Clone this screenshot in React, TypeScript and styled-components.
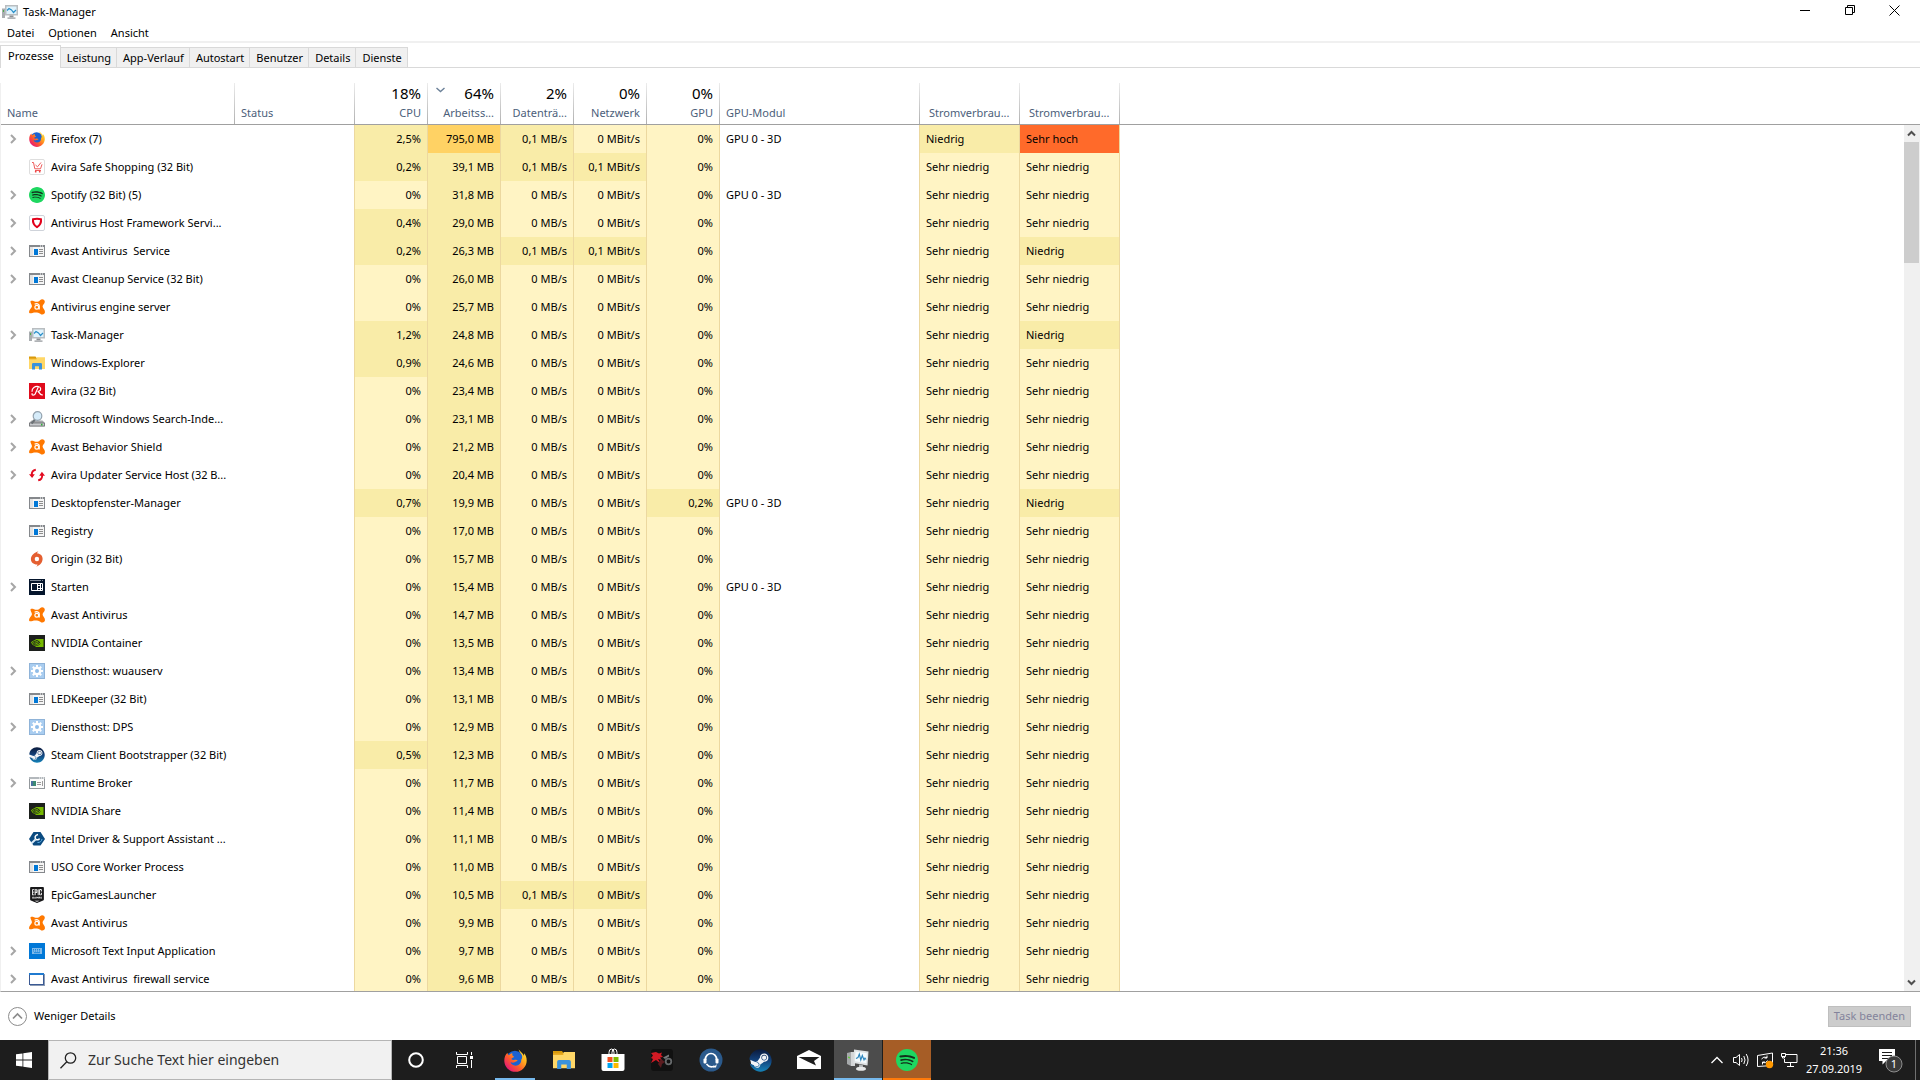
import React from "react";
import styled, { createGlobalStyle, css } from "styled-components";
import { SiEpicgames, SiNvidia, SiSpotify } from "react-icons/si";
import { FaSteam } from "react-icons/fa";

const font = `"Noto Sans", "Open Sans", sans-serif`;

const GlobalStyle = createGlobalStyle`
  *, *::before, *::after { box-sizing: border-box; }
  body { margin: 0; background: #fff; color: #000; font: 11px/16px ${font}; overflow: hidden; }
  button, input { font: inherit; color: inherit; border: 0; margin: 0; padding: 0; background: none; }
`;

const Desktop = styled.div`
  display: flex;
  flex-direction: column;
  height: 100vh;
`;

const TitleBar = styled.header`
  display: flex;
  align-items: flex-start;
  justify-content: space-between;
  height: 24px;
`;

const Title = styled.h1`
  display: flex;
  align-items: center;
  gap: 5px;
  margin: 0;
  padding: 4px 0 0 2px;
  font-size: 11px;
  font-weight: 400;
  line-height: 16px;
`;

const WindowControls = styled.div`
  display: flex;
  padding-right: 3px;
`;

const ControlButton = styled.button`
  display: flex;
  align-items: center;
  justify-content: center;
  width: 45px;
  height: 20px;
`;

const MenuBar = styled.nav`
  display: flex;
  height: 19px;
  border-bottom: 2px solid #f0f0f0;
`;

const MenuItem = styled.button`
  padding: 0 7px;
  line-height: 17px;
`;

const Tabs = styled.div`
  display: flex;
  align-items: flex-end;
  height: 25px;
  flex: none;
  box-shadow: inset 0 -1px 0 #d9d9d9;
`;

const Tab = styled.button<{ $active?: boolean }>`
  height: 21px;
  padding: 0 5px 0 6px;
  line-height: 18px;
  border: 1px solid #d9d9d9;
  border-left-width: 0;
  background: #f0f0f0;
  ${(p) =>
    p.$active &&
    css`
      height: 23px;
      padding: 0 6px 3px 7px;
      border-left-width: 1px;
      border-bottom: 0;
      background: #fff;
    `}
`;

const ProcessPane = styled.main`
  position: relative;
  flex: 1;
  min-height: 0;
  margin-top: 15px;
  overflow: hidden;
  border-bottom: 1px solid #a0a0a0;
  border-left: 1px solid #f0f0f0;
`;

const Table = styled.table`
  width: 100%;
  table-layout: fixed;
  border-collapse: separate;
  border-spacing: 0;
`;

const Col = styled.col<{ $w?: number }>`
  width: ${(p) => (p.$w ? `${p.$w}px` : "auto")};
`;

const HeadCell = styled.th<{ $align?: string; $plain?: boolean; $inset?: boolean }>`
  position: relative;
  height: 42px;
  padding: 0 6px 3px ${(p) => (p.$inset ? 9 : 6)}px;
  border-bottom: 1px solid #a0a0a0;
  background: ${(p) =>
    p.$plain ? "none" : "linear-gradient(#ececec, #b0b0b0) right / 1px 100% no-repeat"};
  color: #4c607a;
  font-weight: 400;
  text-align: ${(p) => p.$align ?? "left"};
  vertical-align: bottom;
  white-space: nowrap;
  ${(p) => p.$align === "right" && "padding-right: 7px;"}
`;

const Total = styled.span`
  display: block;
  margin-bottom: 2px;
  color: #000;
  font-size: 15px;
  line-height: 20px;
`;

const SortMark = styled.svg`
  position: absolute;
  top: 4px;
  left: 8px;
`;

const heat = ["#fff4c4", "#f9eca8", "#ffd264", "#ff6a2a"];

const Cell = styled.td<{ $heat?: number; $align?: string; $edge?: boolean }>`
  height: 28px;
  padding: 0 6px;
  background: ${(p) => (p.$heat === undefined ? "#fff" : heat[p.$heat])};
  border-right: ${(p) => (p.$edge ? "1px solid #ecd8a0" : "0")};
  text-align: ${(p) => p.$align ?? "left"};
  white-space: pre;
`;

const NameCell = styled.div`
  display: flex;
  align-items: center;
  height: 28px;
  padding-left: 2px;
`;

const Expander = styled.button`
  display: flex;
  width: 20px;
  height: 16px;
  align-items: center;
  padding-left: 1px;
`;

const ExpanderGap = styled.span`
  width: 20px;
`;

const ProcessName = styled.span`
  margin-left: 6px;
`;

const ScrollBar = styled.div`
  position: absolute;
  top: 42px;
  right: 0;
  bottom: 0;
  display: flex;
  flex-direction: column;
  width: 16px;
  background: #f0f0f0;
`;

const ScrollButton = styled.button`
  display: flex;
  align-items: center;
  justify-content: center;
  width: 15px;
  height: 17px;
`;

const ScrollTrack = styled.div`
  flex: 1;
  padding-right: 1px;
`;

const ScrollThumb = styled.div`
  height: 121px;
  background: #cdcdcd;
`;

const Footer = styled.footer`
  display: flex;
  align-items: center;
  justify-content: space-between;
  height: 48px;
  padding: 0 9px 0 8px;
`;

const DetailsToggle = styled.button`
  display: flex;
  align-items: center;
  gap: 7px;
`;

const EndTask = styled.button`
  height: 21px;
  padding: 0 5px;
  border: 1px solid #bfbfbf;
  background: #cccccc;
  color: #83839b;
  line-height: 18px;
`;

const TaskBar = styled.div`
  display: flex;
  height: 40px;
  background: #1d1d1d;
  color: #fff;
`;

const TaskSlot = styled.button<{ $bg?: string; $line?: string; $short?: boolean }>`
  display: flex;
  align-items: center;
  justify-content: center;
  width: 48px;
  height: 40px;
  background: ${(p) =>
    [
      p.$line
        ? `linear-gradient(${p.$line}, ${p.$line}) bottom / ${p.$short ? "40px" : "100%"} 2px no-repeat`
        : "",
      p.$bg ? `linear-gradient(${p.$bg}, ${p.$bg})` : "",
    ]
      .filter(Boolean)
      .join(", ") || "none"};
`;

const SearchBox = styled.label`
  display: flex;
  align-items: center;
  gap: 11px;
  width: 344px;
  padding: 0 11px;
  border: 1px solid #b5b5b5;
  background: #f1f1f1;
`;

const SearchInput = styled.input`
  flex: 1;
  min-width: 0;
  outline: 0;
  font-size: 14px;
  line-height: 20px;
  &::placeholder {
    color: #333;
    opacity: 1;
  }
`;

const PinnedApps = styled.div`
  display: flex;
  gap: 1px;
  margin-left: 3px;
`;

const Tray = styled.div`
  display: flex;
  align-items: center;
  margin-left: auto;
`;

const TrayButton = styled.button`
  display: flex;
  align-items: center;
  justify-content: center;
  width: 24px;
  height: 40px;
`;

const Clock = styled.time`
  width: 66px;
  font-size: 11px;
  line-height: 18px;
  text-align: center;
`;

const ActionCenter = styled.button`
  display: flex;
  align-items: center;
  justify-content: center;
  width: 48px;
  height: 40px;
`;

const ShowDesktop = styled.button`
  width: 5px;
  height: 40px;
  border-left: 1px solid #707070;
`;

const Stack = styled.span<{ $size: number }>`
  display: grid;
  place-items: center;
  width: ${(p) => p.$size}px;
  height: ${(p) => p.$size}px;
  flex: none;
  > * {
    grid-area: 1 / 1;
  }
`;

const Drawing = styled.svg`
  flex: none;
`;

type IconProps = { size?: number };

const Svg = ({ size = 16, children, box = 16 }: IconProps & { children: React.ReactNode; box?: number }) => (
  <Drawing width={size} height={size} viewBox={`0 0 ${box} ${box}`} aria-hidden="true">
    {children}
  </Drawing>
);

const Firefox = ({ size }: IconProps) => (
  <Svg size={size}>
    <defs>
      <linearGradient id="fxBody" x1="1" y1="0" x2="0.1" y2="0.9">
        <stop offset="0" stopColor="#fff04a" />
        <stop offset="0.35" stopColor="#ffb01e" />
        <stop offset="0.65" stopColor="#ff5a2c" />
        <stop offset="1" stopColor="#e2127e" />
      </linearGradient>
    </defs>
    <circle cx="7.6" cy="7.2" r="6" fill="#1b62d1" />
    <path
      d="M10.2.3c.2 1.7 1.6 2.4 2.2 3.900.5 1.300.2 2.400-.4 3.300.1 2.400-1.600 4.100-3.900 4.100-1.900 0-3.300-1.100-3.500-2.500 1 .7 2.100.6 3.100 0 .8-.5 1.500-.6 1.900-.7-.5-.9-1.600-1-2.600-.8-.8.200-1.500-.1-1.900-.6.700-1.100 1.900-.9 1.900-1.700-1.100-.5-1.300-1.100-1.200-2.400-1.100.3-1.900.8-2.400 1.400-.6-.2-.9-.9-1-1.700C1 3.800.2 5.700.2 8c0 4.400 3.500 7.900 7.800 7.900s7.800-3.500 7.800-7.900c0-2.200-.8-3.900-1.900-5 .1.700.1 1.300 0 1.700C13.200 2.600 11.300 2 10.200.3z"
      fill="url(#fxBody)"
    />
  </Svg>
);

const Cart = () => (
  <Svg>
    <rect x="0.5" y="0.5" width="15" height="15" rx="1.5" fill="#fff" stroke="#dedede" />
    <path d="M3 3.5h1.500l1.300 6.300h5.700L13 5.300M6 11.500h6M6.500 6l2 1.800L12 3.500" fill="none" stroke="#ee5b5b" strokeWidth="1" />
    <circle cx="6.7" cy="12.7" r="0.9" fill="#e44" />
    <circle cx="10.7" cy="12.7" r="0.9" fill="#e44" />
  </Svg>
);

const Spotify = ({ size = 16 }: IconProps) => (
  <Stack $size={size}>
    <Svg size={size - 2}>
      <circle cx="8" cy="8" r="7.5" fill="#12301c" />
    </Svg>
    <SiSpotify size={size} color="#1ed760" />
  </Stack>
);

const Shield = () => (
  <Svg>
    <rect x="0.5" y="0.5" width="15" height="15" rx="1.5" fill="#fff" stroke="#cfd3da" />
    <path d="M4 4.200c2.600-.6 5.400-.6 8 0 .4 3.400-1 6.200-4 8-3-1.800-4.400-4.600-4-8z" fill="none" stroke="#e2001a" strokeWidth="2" />
  </Svg>
);

const AppWindow = () => (
  <Svg>
    <rect x="0.5" y="2.5" width="15" height="11" fill="#f5f5f5" stroke="#85888c" />
    <path d="M0 2h16v2H0z" fill="#85888c" />
    <path d="M11 2.500h1v1h-1zM13 2.500h1v1h-1z" fill="#fff" />
    <path d="M1 4h3v9H1z" fill="#e3e3e3" />
    <path d="M5 6h4v6H5z" fill="#0078d7" />
    <path d="M10 6.500h4M10 8.500h4M10 10.500h4" stroke="#8e8e8e" />
  </Svg>
);

const BrokerWindow = () => (
  <Svg>
    <rect x="0.5" y="2.5" width="15" height="11" fill="#fbfbfb" stroke="#93989c" />
    <path d="M0 2h16v2H0z" fill="#b3b8bc" />
    <path d="M10 2.500h1v1h-1zM12 2.500h1v1h-1zM14 2.500h1v1h-1z" fill="#fff" />
    <path d="M2 6h5v5H2z" fill="#3c8a72" />
    <path d="M2 6h2v5H2z" fill="#4a6fa0" />
    <path d="M8 7.500h4M8 9.500h4M13.500 6v5" stroke="#9b9b9b" />
  </Svg>
);

const PlainWindow = () => (
  <Svg>
    <path d="M1 3h15v12H1z" fill="#8b9bb5" />
    <rect x="0.5" y="2.5" width="14" height="11" fill="#fff" stroke="#3b5a94" />
    <path d="M0 2h15v2H0z" fill="#1f7ad0" />
  </Svg>
);

const Avast = () => (
  <Svg>
    <path
      d="M1.500 3C1.200 1.600 3 1.400 5 2.200c2.500 1 4.700.6 6-1C13-.5 16 .5 15.800 3c-.2 2.200-2.200 2.500-2.200 4.500 0 2 2.400 3 2.400 5.500 0 2.500-3 3.300-4.700 1.700C9.500 13.400 6 13 3.500 13.900 1.500 14.600 0 14.500 0 13c0-2 2.600-4 2.900-5.500C3.100 6 1.900 5 1.500 3z"
      fill="#ff7800"
    />
    <path d="M5.600 5.200c1.800-1 4.600-.7 4.600 1.600v3.600" fill="none" stroke="#fff" strokeWidth="1.300" />
    <circle cx="7.8" cy="8.3" r="1.9" fill="none" stroke="#fff" strokeWidth="1.2" />
  </Svg>
);

const TaskManager = ({ size }: IconProps) => (
  <Svg size={size}>
    <path d="M0 4.500h3v9.500H0z" fill="#a9adb0" />
    <path d="M1 6h1v2H1z" fill="#4fae4a" />
    <path d="M3 1h13v10.500H3z" fill="#b9bdc0" />
    <path d="M4.500 2.500h10v7.500h-10z" fill="#dff3fd" />
    <path d="M5 6.500l2-2 2.500 1.500 2 2.500 2.500-2.500" fill="none" stroke="#2b8fc9" strokeWidth="1.200" />
    <path d="M7.500 11.500h4v2h-4z" fill="#8d9194" />
    <path d="M5.500 13.300h8V15h-8z" fill="#b0b3b6" />
  </Svg>
);

const TaskManagerLarge = () => (
  <Svg size={24} box={24}>
    <path d="M1 5l4-1v14l-4-2z" fill="#a6a9ab" />
    <path d="M5 4h4v14H5z" fill="#d4d6d8" />
    <path d="M2 8.500l2 .5v1.500L2 10z" fill="#62c93f" />
    <path d="M8 1.500l14.500 2-1 14L7.500 15z" fill="#dfe2e4" />
    <path d="M9.500 3.500l11.500 1.700-.8 10L9 13.300z" fill="#f4fafd" />
    <path d="M10 10.500l2-1 1.300-3.500 1.500 6 1.500-4.500 1.700 4.500 1-2 1 1.500" fill="none" stroke="#2a84bd" strokeWidth="1.100" />
    <path d="M13 16.500l4 .7v3h-4z" fill="#b4b7ba" />
    <ellipse cx="15" cy="20.800" rx="5" ry="2" fill="#e6e7e8" />
  </Svg>
);

const Explorer = ({ size }: IconProps) => (
  <Svg size={size}>
    <path d="M0 1.500h6.500l1.500 2H0z" fill="#d99a0b" />
    <path d="M0 3.500h7l1-1.300h8V14H0z" fill="#ffd767" />
    <path d="M0 3h7.500v1.300H0z" fill="#e8a81c" />
    <path d="M3 14.500V9.300q0-1.300 1.300-1.300h7.400q1.300 0 1.300 1.300v5.200h-3v-3.200H6v3.200z" fill="#3a92dc" />
  </Svg>
);

const Avira = () => (
  <Svg>
    <path d="M0 0h16v16H0z" fill="#e00b1c" />
    <path
      d="M3 8.700C2.700 4.700 6.200 3 9.300 3.500c3.200.5 3 4 .6 4.700M3.300 10.300q-.8 1.800.9 1.800 1.400 0 2.200-1.500L9.300 4M8.800 8l2.500 3q1 1.200 2.500.8"
      fill="none"
      stroke="#fff"
      strokeWidth="1.200"
    />
  </Svg>
);

const SearchIndexer = () => (
  <Svg>
    <path d="M2.500 9.500h11L16 12v3.500H0V12z" fill="#a3a5a8" />
    <path d="M0.500 12h15v3h-15z" fill="#c9cbce" stroke="#6e7074" strokeWidth="0.8" />
    <path d="M12 12.700h1.500v1.700H12z" fill="#2fae35" />
    <path d="M6 8.500L2.500 12.500" stroke="#6c7176" strokeWidth="2" />
    <circle cx="8.5" cy="5" r="4.3" fill="#d6ecfa" stroke="#93a2ae" strokeWidth="1.2" />
  </Svg>
);

const Updater = () => (
  <Svg>
    <path d="M6.800 2.700C4 3 2.500 5 2.900 8.200M9.200 13.300c2.800-.3 4.300-2.300 3.900-5.500" fill="none" stroke="#e30b20" strokeWidth="1.9" />
    <path d="M0 7.300h5.800L3.100 11zM10.200 8.700H16L12.900 4.800z" fill="#e30b20" />
  </Svg>
);

const Origin = () => (
  <Svg>
    <path
      d="M9.500.3C8.600.9 8.300 1.700 8.200 2.400c3.300 0 5.400 2.400 5.400 5.400 0 3.600-2.300 6.500-6.300 7.900.9-.8 1.200-1.500 1.200-2.200C4.500 13.700 1.900 11.300 1.900 8c0-3.600 3.600-6.600 7.600-7.700z"
      fill="#e45f31"
    />
    <circle cx="7.9" cy="8" r="2.2" fill="#fff" />
  </Svg>
);

const StartTile = () => (
  <Svg>
    <path d="M0 0h16v16H0z" fill="#04152c" />
    <path d="M1 1.500h11M13 1.500h1" stroke="#7f8a99" />
    <path d="M2.500 4.500h11v7h-11zM8.500 4.500v7M11.500 4.500v7M8.500 6.500h3M8.500 9.500h5" fill="none" stroke="#fff" />
  </Svg>
);

const Nvidia = () => (
  <Stack $size={16}>
    <Svg>
      <path d="M0 0h16v16H0z" fill="#1c1f1c" />
      <path d="M7 4h7.500v8H7z" fill="#76b900" />
      <path d="M2 8c1.500-2.500 3-3.300 5-3.300 2.200 0 3.500 1.300 5 3.300-1.500 2-3 3.300-5 3.300S3.500 10.500 2 8z" fill="#1c1f1c" />
    </Svg>
    <SiNvidia size={12} color="#76b900" />
  </Stack>
);

const Gear = () => (
  <Svg>
    <rect x="0.5" y="0.5" width="15" height="15" fill="#a9cdf0" stroke="#8fb3d8" />
    <path
      d="M8 2v12M2 8h12M3.800 3.800l8.400 8.400M12.200 3.800l-8.400 8.400"
      stroke="#fff"
      strokeWidth="2"
    />
    <circle cx="8" cy="8" r="4.3" fill="#fff" />
    <circle cx="8" cy="8" r="2" fill="#8fbce8" />
  </Svg>
);

const Steam = ({ size = 16 }: IconProps) => (
  <Stack $size={size}>
    <Svg size={size}>
      <defs>
        <linearGradient id="steamBody" x1="0" y1="0" x2="0" y2="1">
          <stop offset="0" stopColor="#0b1a3c" />
          <stop offset="0.5" stopColor="#12427c" />
          <stop offset="1" stopColor="#1583b8" />
        </linearGradient>
      </defs>
      <circle cx="8" cy="8" r="7" fill="#f2f4f7" />
    </Svg>
    <FaSteam size={size} fill="url(#steamBody)" />
  </Stack>
);

const Intel = () => (
  <Svg>
    <path d="M4.500 1h7L16 8l-4.500 6.500h-7L0 8z" fill="#0a4a80" />
    <path d="M9 3.500c-3 .7-3.700 3.300-2 4.800 1.300 1 3 .6 3.500-.8" fill="none" stroke="#fff" strokeWidth="1.5" />
    <path d="M6.500 8.500L2.500 12.300" stroke="#d8e9f6" strokeWidth="2" />
    <path d="M8.500 11.500c2.500.2 4-1 4.500-3.500" fill="none" stroke="#5fb0e5" />
  </Svg>
);

const Epic = () => (
  <Stack $size={16}>
    <Svg>
      <path d="M2 0h12v13.300L8 16l-6-2.700z" fill="#fff" />
    </Svg>
    <SiEpicgames size={16} color="#18181a" />
  </Stack>
);

const TextInputApp = () => (
  <Svg>
    <path d="M0 0h16v16H0z" fill="#0078d7" />
    <path d="M3 5h10v6H3z" fill="#7fbaea" />
    <path d="M4 6.500h8M4 8h8" stroke="#0078d7" strokeWidth="0.8" strokeDasharray="1 1" />
    <path d="M5 9.700h6" stroke="#0078d7" strokeWidth="0.8" />
  </Svg>
);

const Chevron = () => (
  <svg width="8" height="10" viewBox="0 0 8 10" fill="none" stroke="#a6a6a6" strokeWidth="2" aria-hidden="true">
    <path d="M1 1l4 4-4 4" />
  </svg>
);

const ScrollArrow = ({ down }: { down?: boolean }) => (
  <svg width="9" height="7" viewBox="0 0 9 7" fill="none" stroke="#505050" strokeWidth="2" aria-hidden="true">
    <path d={down ? "M1 1.500l3.500 3.500L8 1.500" : "M1 5.500L4.500 2 8 5.500"} />
  </svg>
);

const VL = "Sehr niedrig";
const L = "Niedrig";

type Process = {
  name: string;
  icon: React.FC<IconProps>;
  open?: boolean;
  cpu?: string;
  mem: string;
  disk?: string;
  net?: string;
  netHeat?: number;
  gpu?: string;
  engine?: boolean;
  power?: string;
  trend?: string;
};

const processes: Process[] = [
  { name: "Firefox (7)", icon: Firefox, open: true, cpu: "2,5", mem: "795,0", disk: "0,1", engine: true, power: L, trend: "Sehr hoch" },
  { name: "Avira Safe Shopping (32 Bit)", icon: Cart, cpu: "0,2", mem: "39,1", disk: "0,1", net: "0,1", netHeat: 1 },
  { name: "Spotify (32 Bit) (5)", icon: Spotify, open: true, mem: "31,8", engine: true },
  { name: "Antivirus Host Framework Servi...", icon: Shield, open: true, cpu: "0,4", mem: "29,0" },
  { name: "Avast Antivirus  Service", icon: AppWindow, open: true, cpu: "0,2", mem: "26,3", disk: "0,1", net: "0,1", netHeat: 1, trend: L },
  { name: "Avast Cleanup Service (32 Bit)", icon: AppWindow, open: true, mem: "26,0" },
  { name: "Antivirus engine server", icon: Avast, mem: "25,7" },
  { name: "Task-Manager", icon: TaskManager, open: true, cpu: "1,2", mem: "24,8", trend: L },
  { name: "Windows-Explorer", icon: Explorer, cpu: "0,9", mem: "24,6" },
  { name: "Avira (32 Bit)", icon: Avira, mem: "23,4" },
  { name: "Microsoft Windows Search-Inde...", icon: SearchIndexer, open: true, mem: "23,1" },
  { name: "Avast Behavior Shield", icon: Avast, open: true, mem: "21,2" },
  { name: "Avira Updater Service Host (32 B...", icon: Updater, open: true, mem: "20,4" },
  { name: "Desktopfenster-Manager", icon: AppWindow, cpu: "0,7", mem: "19,9", gpu: "0,2", engine: true, trend: L },
  { name: "Registry", icon: AppWindow, mem: "17,0" },
  { name: "Origin (32 Bit)", icon: Origin, mem: "15,7" },
  { name: "Starten", icon: StartTile, open: true, mem: "15,4", engine: true },
  { name: "Avast Antivirus", icon: Avast, mem: "14,7" },
  { name: "NVIDIA Container", icon: Nvidia, mem: "13,5" },
  { name: "Diensthost: wuauserv", icon: Gear, open: true, mem: "13,4" },
  { name: "LEDKeeper (32 Bit)", icon: AppWindow, mem: "13,1" },
  { name: "Diensthost: DPS", icon: Gear, open: true, mem: "12,9" },
  { name: "Steam Client Bootstrapper (32 Bit)", icon: Steam, cpu: "0,5", mem: "12,3" },
  { name: "Runtime Broker", icon: BrokerWindow, open: true, mem: "11,7" },
  { name: "NVIDIA Share", icon: Nvidia, mem: "11,4" },
  { name: "Intel Driver & Support Assistant ...", icon: Intel, mem: "11,1" },
  { name: "USO Core Worker Process", icon: AppWindow, mem: "11,0" },
  { name: "EpicGamesLauncher", icon: Epic, mem: "10,5", disk: "0,1", netHeat: 1 },
  { name: "Avast Antivirus", icon: Avast, mem: "9,9" },
  { name: "Microsoft Text Input Application", icon: TextInputApp, open: true, mem: "9,7" },
  { name: "Avast Antivirus  firewall service", icon: PlainWindow, open: true, mem: "9,6" },
];

const powerHeat = (value: string) => (value === VL ? 0 : value === L ? 1 : 3);

const ProcessRow = ({ p }: { p: Process }) => {
  const Icon = p.icon;
  const power = p.power ?? VL;
  const trend = p.trend ?? VL;
  return (
    <tr>
      <Cell>
        <NameCell>
          {p.open ? (
            <Expander aria-label={`${p.name} erweitern`}>
              <Chevron />
            </Expander>
          ) : (
            <ExpanderGap />
          )}
          <Icon />
          <ProcessName>{p.name}</ProcessName>
        </NameCell>
      </Cell>
      <Cell $edge />
      <Cell $edge $align="right" $heat={p.cpu ? 1 : 0}>{p.cpu ?? "0"}%</Cell>
      <Cell $edge $align="right" $heat={p.mem === "795,0" ? 2 : 1}>{p.mem} MB</Cell>
      <Cell $edge $align="right" $heat={p.disk ? 1 : 0}>{p.disk ?? "0"} MB/s</Cell>
      <Cell $edge $align="right" $heat={p.netHeat ?? 0}>{p.net ?? "0"} MBit/s</Cell>
      <Cell $edge $align="right" $heat={p.gpu ? 1 : 0}>{p.gpu ?? "0"}%</Cell>
      <Cell $edge>{p.engine ? "GPU 0 - 3D" : ""}</Cell>
      <Cell $edge $heat={powerHeat(power)}>{power}</Cell>
      <Cell $edge $heat={powerHeat(trend)}>{trend}</Cell>
      <Cell />
    </tr>
  );
};

const totals = [
  ["18%", "CPU"],
  ["64%", "Arbeitss..."],
  ["2%", "Datenträ..."],
  ["0%", "Netzwerk"],
  ["0%", "GPU"],
];

const columnWidths = [234, 120, 73, 73, 73, 73, 73, 200, 100, 100, undefined];

export default function App() {
  return (
    <Desktop>
      <GlobalStyle />
      <TitleBar>
        <Title>
          <TaskManager />
          Task-Manager
        </Title>
        <WindowControls>
          <ControlButton aria-label="Minimieren">
            <svg width="10" height="10" stroke="#000"><path d="M0 5.500h10" /></svg>
          </ControlButton>
          <ControlButton aria-label="Verkleinern">
            <svg width="10" height="10" fill="none" stroke="#000"><path d="M0.500 2.500h7v7h-7zM2.500 2.500v-2h7v7h-2" /></svg>
          </ControlButton>
          <ControlButton aria-label="Schließen">
            <svg width="11" height="11" stroke="#000"><path d="M0.500 0.500l10 10M10.500 0.500l-10 10" /></svg>
          </ControlButton>
        </WindowControls>
      </TitleBar>
      <MenuBar>
        <MenuItem>Datei</MenuItem>
        <MenuItem>Optionen</MenuItem>
        <MenuItem>Ansicht</MenuItem>
      </MenuBar>
      <Tabs role="tablist">
        {["Prozesse", "Leistung", "App-Verlauf", "Autostart", "Benutzer", "Details", "Dienste"].map((t, i) => (
          <Tab key={t} role="tab" aria-selected={i === 0} $active={i === 0}>{t}</Tab>
        ))}
      </Tabs>

      <ProcessPane>
        <Table>
          <colgroup>
            {columnWidths.map((w, i) => <Col key={i} $w={w} />)}
          </colgroup>
          <thead>
            <tr>
              <HeadCell>Name</HeadCell>
              <HeadCell>Status</HeadCell>
              {totals.map(([total, label]) => (
                <HeadCell key={label} $align="right">
                  {total === "64%" && (
                    <SortMark width="9" height="6" viewBox="0 0 9 6" fill="none" stroke="#6d8299" strokeWidth="1.4">
                      <path d="M0.500 1l4 3.500 4-3.500" />
                    </SortMark>
                  )}
                  <Total>{total}</Total>
                  {label}
                </HeadCell>
              ))}
              <HeadCell>GPU-Modul</HeadCell>
              <HeadCell $inset>Stromverbrau...</HeadCell>
              <HeadCell $inset>Stromverbrau...</HeadCell>
              <HeadCell $plain />
            </tr>
          </thead>
          <tbody>
            {processes.map((p, i) => <ProcessRow key={i} p={p} />)}
          </tbody>
        </Table>
        <ScrollBar>
          <ScrollButton aria-label="Nach oben"><ScrollArrow /></ScrollButton>
          <ScrollTrack><ScrollThumb /></ScrollTrack>
          <ScrollButton aria-label="Nach unten"><ScrollArrow down /></ScrollButton>
        </ScrollBar>
      </ProcessPane>

      <Footer>
        <DetailsToggle>
          <svg width="19" height="19" viewBox="0 0 19 19" fill="none" stroke="#8c8c8c">
            <circle cx="9.5" cy="9.5" r="9" />
            <path d="M5 11.500l4.500-4.500 4.500 4.500" strokeWidth="1.7" />
          </svg>
          Weniger Details
        </DetailsToggle>
        <EndTask disabled>Task beenden</EndTask>
      </Footer>

      <TaskBar>
        <TaskSlot aria-label="Start">
          <svg width="16" height="16" viewBox="0 0 16 16" fill="#fff">
            <path d="M0 2.300l6.500-.9v6.200H0zM7.300 1.300L16 0v7.600H7.300zM0 8.400h6.500v6.200L0 13.700zM7.300 8.400H16V16l-8.700-1.300z" />
          </svg>
        </TaskSlot>
        <SearchBox>
          <svg width="17" height="17" viewBox="0 0 17 17" fill="none" stroke="#222" strokeWidth="1.3">
            <circle cx="10.5" cy="6" r="5.2" />
            <path d="M6.800 9.800L0.500 16.200" />
          </svg>
          <SearchInput aria-label="Suche" placeholder="Zur Suche Text hier eingeben" />
        </SearchBox>
        <TaskSlot aria-label="Cortana">
          <svg width="16" height="16" viewBox="0 0 16 16" fill="none" stroke="#fff" strokeWidth="2"><circle cx="8" cy="8" r="6.8" /></svg>
        </TaskSlot>
        <TaskSlot aria-label="Taskansicht">
          <svg width="17" height="16" viewBox="0 0 17 16" fill="none" stroke="#fff">
            <path d="M1.500 4.500h9v7h-9zM0.500 0v2.500h11V0M0.500 16v-2.500h11V16M15.500 0v3M15.500 8v8" />
            <path d="M14 4h3v3h-3z" fill="#fff" stroke="none" />
          </svg>
        </TaskSlot>
        <PinnedApps>
          <TaskSlot aria-label="Firefox" $line="#76b9ed" $short><Firefox size={23} /></TaskSlot>
          <TaskSlot aria-label="Explorer"><Explorer size={22} /></TaskSlot>
          <TaskSlot aria-label="Microsoft Store">
            <Svg size={24} box={24}>
              <path d="M8 7V4.500Q8 1 10.500 1T13 4.500V7M11 7V4.500Q11 1 13.500 1T16 4.500V7" fill="none" stroke="#fff" />
              <path d="M0.500 6h23v15q0 2-2 2h-19q-2 0-2-2z" fill="#fff" />
              <path d="M6.500 9h5v5h-5z" fill="#f25022" />
              <path d="M12.500 9h5v5h-5z" fill="#7fba00" />
              <path d="M6.500 15h5v5h-5z" fill="#00a4ef" />
              <path d="M12.500 15h5v5h-5z" fill="#ffb900" />
            </Svg>
          </TaskSlot>
          <TaskSlot aria-label="Dragon Center">
            <Svg size={22} box={22}>
              <rect width="22" height="22" rx="3" fill="#111" />
              <path d="M0 4l5-1 3 1.500 3-1-1 2.500 2 2-3 .5 2 2.500-4-1 3 5-5-4-5 3 2-4-2-1 2-2.500z" fill="#d21a24" />
              <path d="M10 10l4 3-3 2-1 4-3-4z" fill="#5c1c20" />
              <circle cx="17.500" cy="12.500" r="2.800" fill="none" stroke="#66696b" strokeWidth="1.800" />
              <path d="M12 8.500l6-3v2l-4 2.500z" fill="#77797b" />
            </Svg>
          </TaskSlot>
          <TaskSlot aria-label="TeamSpeak">
            <Svg size={24} box={24}>
              <circle cx="12" cy="12" r="11.5" fill="#2b5a8c" />
              <path d="M6.500 12V11a5.500 5.500 0 0 1 11 0v1" fill="none" stroke="#fff" strokeWidth="1.700" />
              <rect x="4.5" y="10.5" width="3" height="5" rx="1" fill="#fff" />
              <rect x="16.5" y="10.5" width="3" height="5" rx="1" fill="#fff" />
              <path d="M7.500 16q3 4 7 2.500" fill="none" stroke="#fff" strokeWidth="1.6" />
              <path d="M14 17.500q3 1 4-2l-1 4h-3z" fill="#fff" />
            </Svg>
          </TaskSlot>
          <TaskSlot aria-label="Steam"><Steam size={23} /></TaskSlot>
          <TaskSlot aria-label="Mail">
            <Svg size={24} box={24}>
              <path d="M0 8L12 2l12 6v13H0z" fill="#fff" />
              <path d="M1.500 9h21L17 13l2 4.500-8.500-4z" fill="#1d1d1d" />
            </Svg>
          </TaskSlot>
          <TaskSlot aria-label="Task-Manager" $bg="#4c4c4c" $line="#76b9ed"><TaskManagerLarge /></TaskSlot>
          <TaskSlot aria-label="Spotify" $bg="#a65d26" $line="#ff7a0a"><Spotify size={22} /></TaskSlot>
        </PinnedApps>
        <Tray>
          <TrayButton aria-label="Ausgeblendete Symbole">
            <svg width="12" height="8" viewBox="0 0 12 8" fill="none" stroke="#fff" strokeWidth="1.3"><path d="M0.500 7L6 1.500 11.500 7" /></svg>
          </TrayButton>
          <TrayButton aria-label="Lautstärke">
            <svg width="17" height="14" viewBox="0 0 17 14" fill="none" stroke="#fff">
              <path d="M0.500 4.500h2.500l3.500-3v11l-3.500-3H0.500zM8.500 5q1.300 2 0 4M10.800 3q2.500 4 0 8M13.200 1q3.700 6 0 12" />
            </svg>
          </TrayButton>
          <TrayButton aria-label="Update">
            <svg width="17" height="17" viewBox="0 0 17 17" fill="none" stroke="#fff">
              <path d="M0.500 3.500L15.500 1v12.500l-15 1z" />
              <path d="M4.500 7q2-3 5.500-1.500M10 3.500v2.500H7.500M10.500 8.500q-1.500 3.500-5 2M5.500 12.500V10H8" />
              <circle cx="12.5" cy="12.5" r="3.7" fill="#ff9800" stroke="none" />
            </svg>
          </TrayButton>
          <TrayButton aria-label="Netzwerk">
            <svg width="17" height="15" viewBox="0 0 17 15" fill="none" stroke="#fff">
              <path d="M5 1.500h11v8H3.500V6M9.500 9.500v3.500M6 13.500h7M0.500 0.500h4v3h-4zM1.500 3.500v1.500h2V3.500" />
            </svg>
          </TrayButton>
          <Clock>21:36<br />27.09.2019</Clock>
          <ActionCenter aria-label="Benachrichtigungen">
            <svg width="26" height="26" viewBox="0 0 26 26">
              <path d="M1 2h16v12H8l-3.500 3.500V14H1z" fill="#fff" />
              <path d="M4 5.500h10M4 8.500h10M4 11.500h10" stroke="#1d1d1d" />
              <circle cx="16" cy="17" r="8" fill="#3a3a3a" stroke="#8e8e8e" />
              <text x="16" y="21" fill="#fff" fontSize="11" textAnchor="middle">1</text>
            </svg>
          </ActionCenter>
          <ShowDesktop aria-label="Desktop anzeigen" />
        </Tray>
      </TaskBar>
    </Desktop>
  );
}
